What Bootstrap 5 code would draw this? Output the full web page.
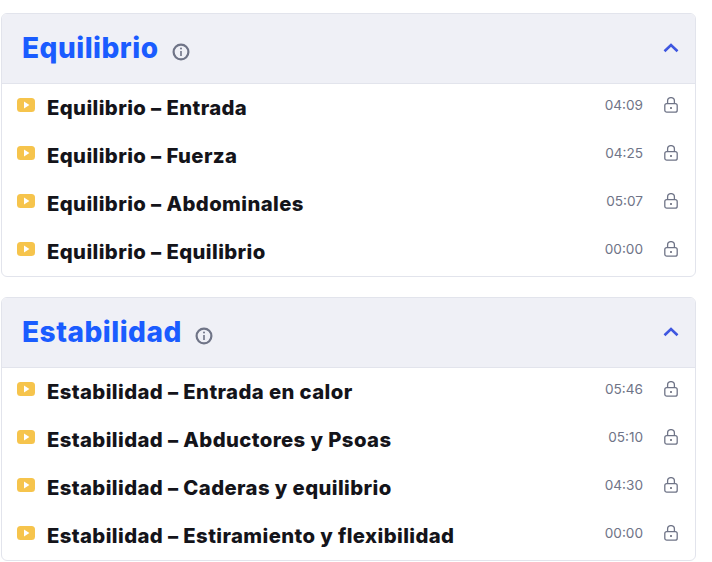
<!DOCTYPE html>
<html lang="es">
<head>
  <meta charset="UTF-8">
  <title>Curso</title>
  <link rel="stylesheet" href="https://cdn.jsdelivr.net/npm/bootstrap@5.3.0/dist/css/bootstrap.min.css">
  <style>
    body { background: #fff; font-family: "Inter", sans-serif; }
    .pagina { padding: 13px 16px 0 1px; }
    .bloque { border: 1px solid #e2e4ec; border-radius: 6px; margin-bottom: 20px; overflow: hidden; }
    .cabecera { height: 70px; background: #eff0f6; border-bottom: 1px solid #e2e4ec; padding: 0 16px 0 20px; }
    .titulo { font-family: "Inter", sans-serif; font-weight: 800; font-size: 28px; color: #1a5cff; margin: 0; letter-spacing: .5px; }
    .info { margin-left: 13px; margin-top: 7px; }
    .fila { height: 48px; padding: 0 17px 0 15px; }
    .play { margin-top: -6px; margin-right: 12px; flex: none; }
    .nombre { font-weight: 800; font-size: 20.3px; color: #14141a; letter-spacing: .4px; }
    .tiempo { font-size: 13.6px; color: #6f7487; margin-top: -6px; margin-right: 1px; }
    .candado { margin-left: 20px; margin-top: -6px; flex: none; }
    .flecha { margin-top: -2px; }
  </style>
</head>
<body>
<div class="pagina" id="contenido"></div>

<script src="https://cdn.jsdelivr.net/npm/bootstrap@5.3.0/dist/js/bootstrap.bundle.min.js"></script>
<script>
  const secciones = [
    { titulo: "Equilibrio", clases: [
      ["Equilibrio – Entrada", "04:09"],
      ["Equilibrio – Fuerza", "04:25"],
      ["Equilibrio – Abdominales", "05:07"],
      ["Equilibrio – Equilibrio", "00:00"]
    ]},
    { titulo: "Estabilidad", clases: [
      ["Estabilidad – Entrada en calor", "05:46"],
      ["Estabilidad – Abductores y Psoas", "05:10"],
      ["Estabilidad – Caderas y equilibrio", "04:30"],
      ["Estabilidad – Estiramiento y flexibilidad", "00:00"]
    ]}
  ];

  const iconoInfo = `<svg class="info" width="18" height="18" viewBox="0 0 18 18" fill="none" stroke="#6f7487"><circle cx="9" cy="9" r="7.4" stroke-width="2.2"/><path d="M9 8v5" stroke-width="1.6"/><circle cx="9" cy="5.4" r="1" fill="#6f7487" stroke="none"/></svg>`;
  const iconoFlecha = `<svg class="flecha" width="16" height="10" viewBox="0 0 16 10" fill="none" stroke="#3f57e0" stroke-width="2.6"><path d="M1.5 8.2 8 2l6.5 6.2"/></svg>`;
  const iconoPlay = `<svg class="play" width="18" height="14" viewBox="0 0 18 14"><rect width="18" height="14" rx="3.5" fill="#f6c44c"/><path d="M7 3.6l5.4 3.4-5.4 3.4z" fill="#fff"/></svg>`;
  const iconoCandado = `<svg class="candado" width="14" height="16" viewBox="0 0 14 16" fill="none" stroke="#6f7487" stroke-width="1.3"><rect x=".8" y="6.6" width="12.4" height="8.6" rx="2"/><path d="M3.6 6.6V3.9a3.4 3.3 0 0 1 6.8 0v2.7"/><circle cx="7" cy="11" r="1" fill="#5c6072" stroke="none"/></svg>`;

  document.getElementById("contenido").innerHTML = secciones.map(s => `
    <section class="bloque bg-white">
      <div class="cabecera d-flex align-items-center">
        <h2 class="titulo">${s.titulo}</h2>${iconoInfo}
        <span class="ms-auto d-flex">${iconoFlecha}</span>
      </div>
      ${s.clases.map(c => `
      <div class="fila d-flex align-items-center">
        ${iconoPlay}
        <span class="nombre">${c[0]}</span>
        <span class="tiempo ms-auto">${c[1]}</span>
        ${iconoCandado}
      </div>`).join("")}
    </section>`).join("");
</script>
</body>
</html>
